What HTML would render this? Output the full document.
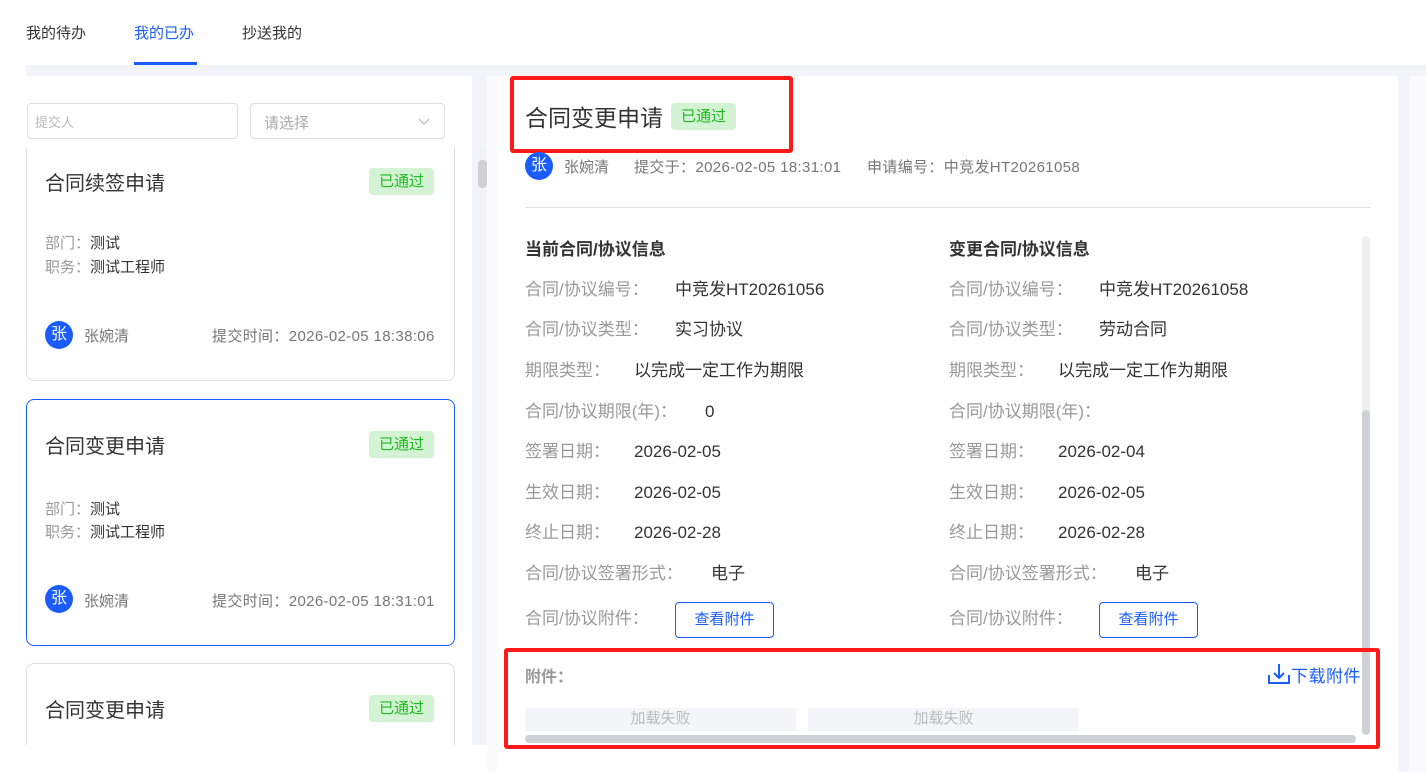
<!DOCTYPE html>
<html><head><meta charset="utf-8"><style>
*{margin:0;padding:0;box-sizing:border-box}
body{width:1426px;height:772px;overflow:hidden;background:#fff;font-family:"Liberation Sans","Noto Sans CJK SC",sans-serif;color:#333;position:relative}
.a{position:absolute;white-space:nowrap}
.tab{font-size:15px;top:22px}
.gray{background:#f3f4f9}
.card{position:absolute;left:26px;width:429px;border:1px solid #dcdfe6;border-radius:8px;background:#fff}
.tag{position:absolute;background:#d4f3d4;color:#1dbb1d;font-size:15px;border-radius:4px;height:27px;line-height:27px;padding:0 10px}
.ct{font-size:20px;color:#333}
.lbl{color:#999;font-size:15px}
.av{width:28px;height:28px;border-radius:50%;background:#1a5cff;color:#fff;font-size:16px;text-align:center;line-height:28px}
.k{position:absolute;white-space:nowrap;color:#999;font-size:17px;line-height:22px}
.v{position:absolute;white-space:nowrap;color:#333;font-size:17px;line-height:22px}
.btn{position:absolute;width:99px;height:36px;border:1px solid #1a5cff;border-radius:4px;color:#1a5cff;font-size:15px;text-align:center;line-height:34px}
.red{position:absolute;border:4px solid #ff1a1a;border-radius:3px}
.tm{letter-spacing:0.35px}
</style></head><body>
<div class="a tab" style="left:26px">我的待办</div>
<div class="a tab" style="left:134px;color:#1a5cff">我的已办</div>
<div class="a" style="left:134px;top:62px;width:63px;height:4px;background:#1a5cff"></div>
<div class="a tab" style="left:242px">抄送我的</div>
<div class="a gray" style="left:26px;top:65px;width:1400px;height:11px"></div>
<div class="a gray" style="left:472px;top:65px;width:15px;height:680px"></div>
<div class="a gray" style="left:1398px;top:65px;width:11px;height:707px"></div>
<div class="a" style="left:1409px;top:76px;width:17px;height:696px;background:#fbfbfd"></div>
<div class="a" style="left:487px;top:76px;width:11px;height:696px;background:#fbfbfd"></div>

<div class="a" style="left:27px;top:103px;width:211px;height:36px;border:1px solid #dcdfe6;border-radius:4px;font-size:13px;color:#bbb;padding:8px 7px">提交人</div>
<div class="a" style="left:250px;top:103px;width:195px;height:36px;border:1px solid #dcdfe6;border-radius:4px;font-size:15px;color:#aaa;padding:8px 13px">请选择<svg style="position:absolute;right:14px;top:14px" width="12" height="8"><path d="M1 1L6 6L11 1" stroke="#bbb" fill="none" stroke-width="1.2"/></svg></div>

<div class="a" style="left:26px;top:148px;width:446px;height:597px;overflow:hidden">
<div class="card" style="top:-10px;height:243px;left:0">
<div class="a ct" style="left:18px;top:28px">合同续签申请</div><div class="tag" style="left:342px;top:29px">已通过</div>
<div class="a lbl" style="left:18px;top:93px">部门：<span style="color:#333">测试</span></div>
<div class="a lbl" style="left:18px;top:117px">职务：<span style="color:#333">测试工程师</span></div>
<div class="a av" style="left:18px;top:182px">张</div><div class="a lbl" style="left:57px;top:186px;color:#777">张婉清</div>
<div class="a lbl tm" style="left:185px;top:186px;color:#777">提交时间：2026-02-05 18:38:06</div>
</div>
<div class="card" style="top:251px;height:247px;left:0;border-color:#1a5cff">
<div class="a ct" style="left:18px;top:30px">合同变更申请</div><div class="tag" style="left:342px;top:31px">已通过</div>
<div class="a lbl" style="left:18px;top:98px">部门：<span style="color:#333">测试</span></div>
<div class="a lbl" style="left:18px;top:121px">职务：<span style="color:#333">测试工程师</span></div>
<div class="a av" style="left:18px;top:185px">张</div><div class="a lbl" style="left:57px;top:190px;color:#777">张婉清</div>
<div class="a lbl tm" style="left:185px;top:190px;color:#777">提交时间：2026-02-05 18:31:01</div>
</div>
<div class="card" style="top:515px;height:120px;left:0">
<div class="a ct" style="left:18px;top:30px">合同变更申请</div><div class="tag" style="left:342px;top:31px">已通过</div>
</div>
</div>
<div class="a" style="left:478px;top:148px;width:9px;height:597px;background:#f3f3f5;border-radius:4px"></div>
<div class="a" style="left:478px;top:160px;width:9px;height:28px;background:#d0d1d4;border-radius:4px"></div>

<div class="a" style="left:525px;top:99px;font-size:23px;color:#333">合同变更申请</div>
<div class="tag" style="left:671px;top:103px">已通过</div>
<div class="red" style="left:510px;top:76px;width:283px;height:77px"></div>
<div class="a av" style="left:525px;top:152px">张</div>
<div class="a" style="left:564px;top:156px;font-size:15px;color:#777">张婉清</div>
<div class="a tm" style="left:634px;top:156px;font-size:15px;color:#777">提交于：2026-02-05 18:31:01</div>
<div class="a tm" style="left:867px;top:156px;font-size:15px;color:#777">申请编号：中竞发HT20261058</div>
<div class="a" style="left:525px;top:207px;width:846px;height:1px;background:#e2e2e2"></div>

<div class="a" style="left:525px;top:235px;font-size:17px;font-weight:bold;color:#333">当前合同/协议信息</div>
<div class="a" style="left:949px;top:235px;font-size:17px;font-weight:bold;color:#333">变更合同/协议信息</div>

<div class="k" style="left:525px;top:279px">合同/协议编号：</div><div class="v" style="left:675px;top:279px">中竞发HT20261056</div>
<div class="k" style="left:525px;top:319px">合同/协议类型：</div><div class="v" style="left:675px;top:319px">实习协议</div>
<div class="k" style="left:525px;top:360px">期限类型：</div><div class="v" style="left:634px;top:360px">以完成一定工作为期限</div>
<div class="k" style="left:525px;top:401px">合同/协议期限(年)：</div><div class="v" style="left:705px;top:401px">0</div>
<div class="k" style="left:525px;top:441px">签署日期：</div><div class="v" style="left:634px;top:441px">2026-02-05</div>
<div class="k" style="left:525px;top:482px">生效日期：</div><div class="v" style="left:634px;top:482px">2026-02-05</div>
<div class="k" style="left:525px;top:522px">终止日期：</div><div class="v" style="left:634px;top:522px">2026-02-28</div>
<div class="k" style="left:525px;top:563px">合同/协议签署形式：</div><div class="v" style="left:711px;top:563px">电子</div>
<div class="k" style="left:525px;top:608px">合同/协议附件：</div>
<div class="btn" style="left:675px;top:602px">查看附件</div>

<div class="k" style="left:949px;top:279px">合同/协议编号：</div><div class="v" style="left:1099px;top:279px">中竞发HT20261058</div>
<div class="k" style="left:949px;top:319px">合同/协议类型：</div><div class="v" style="left:1099px;top:319px">劳动合同</div>
<div class="k" style="left:949px;top:360px">期限类型：</div><div class="v" style="left:1058px;top:360px">以完成一定工作为期限</div>
<div class="k" style="left:949px;top:401px">合同/协议期限(年)：</div>
<div class="k" style="left:949px;top:441px">签署日期：</div><div class="v" style="left:1058px;top:441px">2026-02-04</div>
<div class="k" style="left:949px;top:482px">生效日期：</div><div class="v" style="left:1058px;top:482px">2026-02-05</div>
<div class="k" style="left:949px;top:522px">终止日期：</div><div class="v" style="left:1058px;top:522px">2026-02-28</div>
<div class="k" style="left:949px;top:563px">合同/协议签署形式：</div><div class="v" style="left:1135px;top:563px">电子</div>
<div class="k" style="left:949px;top:608px">合同/协议附件：</div>
<div class="btn" style="left:1099px;top:602px">查看附件</div>

<div class="a" style="left:525px;top:663px;font-size:16px;font-weight:bold;color:#999">附件：</div>
<svg class="a" style="left:1268px;top:663px" width="22" height="22" viewBox="0 0 22 22"><path d="M11 1V15M6 10L11 15L16 10M1 12V20H21V12" stroke="#1a5cff" stroke-width="2" fill="none"/></svg>
<div class="a" style="left:1291px;top:662px;font-size:17px;color:#1a5cff;letter-spacing:0.5px">下载附件</div>
<div class="a" style="left:525px;top:708px;width:271px;height:23px;background:#f4f5f8;color:#bbb;font-size:15px;text-align:center;line-height:21px">加载失败</div>
<div class="a" style="left:808px;top:708px;width:271px;height:23px;background:#f4f5f8;color:#bbb;font-size:15px;text-align:center;line-height:21px">加载失败</div>
<div class="a" style="left:525px;top:735px;width:831px;height:8px;background:#d0d1d4;border-radius:4px"></div>
<div class="a" style="left:1362px;top:236px;width:8px;height:499px;background:#f0f0f0;border-radius:4px"></div>
<div class="a" style="left:1362px;top:410px;width:8px;height:325px;background:#d0d1d4;border-radius:4px"></div>
<div class="red" style="left:504px;top:648px;width:876px;height:101px"></div>
</body></html>
